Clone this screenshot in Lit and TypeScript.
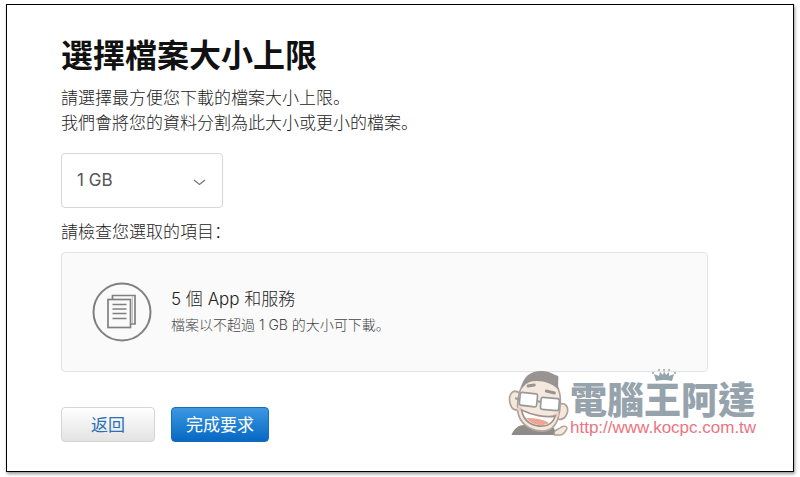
import { LitElement, html, css } from "lit";
import { customElement, state } from "lit/decorators.js";

@customElement("site-watermark")
class SiteWatermark extends LitElement {
  static styles = css`
    :host {
      display: flex;
      align-items: flex-end;
      font-family: "Noto Sans CJK TC", sans-serif;
    }
    .face {
      display: block;
      flex: none;
    }
    .words {
      position: relative;
      width: 186px;
    }
    .name {
      display: block;
      font-size: 37px;
      line-height: 37px;
      font-weight: 900;
      color: #96a3ac;
      white-space: nowrap;
    }
    .link {
      display: block;
      margin-top: 2px;
      font: 17px/17px "Liberation Sans", Arial, sans-serif;
      color: #ec7480;
      text-decoration: none;
      white-space: nowrap;
    }
    .crown {
      position: absolute;
      left: 82px;
      top: -11px;
    }
  `;

  render() {
    return html`
      <svg class="face" width="64" height="66" viewBox="-3 0 70 66" preserveAspectRatio="none" aria-hidden="true">
        <path d="M3 65 C6 58 11 55 17 55 L48 57 C50 58 51 61 52 65 Z" fill="#8f8b89" />
        <path d="M50 65 C49 60 53 60 56 58 C59 55 66 56 63 60 C61 63 58 65 56 65 Z" fill="#f5e8db" stroke="#ada39b" stroke-width="1.500" />
        <path d="M12 23 C4 18 0 25 1 31 C2 38 6 42 12 39 Z" fill="#f5e8db" stroke="#ada39b" stroke-width="1.800" />
        <path d="M55 35 C61 31 66 37 64 43 C62 49 56 51 52 48 Z" fill="#f5e8db" stroke="#ada39b" stroke-width="1.800" />
        <path d="M15 15 C10 24 9 33 10 42 C12 53 22 60 34 61 C45 62 51 57 54 48 C57 38 58 24 53 17 C44 8 24 6 15 15 Z" fill="#f5e9dd" stroke="#ada39b" stroke-width="1.800" />
        <path d="M14 19 C14 7 25 0 37 1 C43 1 48 4 54 6 C55 10 53 13 55 20 C48 14 40 11 30 11 C22 11 18 14 14 19 Z" fill="#999492" />
        <path d="M21 16 L28 15 M41 21 L50 23" stroke="#999492" stroke-width="3" stroke-linecap="round" fill="none" />
        <rect x="12" y="23" width="19" height="13" rx="2" fill="#fff" stroke="#969b9e" stroke-width="1.800" transform="rotate(6 21 30)" />
        <rect x="35" y="28" width="20" height="12" rx="2" fill="#fff" stroke="#969b9e" stroke-width="1.800" transform="rotate(5 45 34)" />
        <path d="M31 31 L35 32 M12 30 L7 28" stroke="#969b9e" stroke-width="2" />
        <ellipse cx="12" cy="39" rx="3" ry="2" fill="#f5cdbd" />
        <ellipse cx="52" cy="45" rx="3" ry="2" fill="#f5cdbd" />
        <path d="M14 40 C25 45 40 48 51 46 C48 54 41 57 33 56 C23 55 16 50 14 40 Z" fill="#fff" stroke="#a39390" stroke-width="1.800" />
        <path d="M19 48 C28 48 38 49 44 53 C36 57 25 55 19 48 Z" fill="#efa593" />
      </svg>
      <div class="words">
        <svg class="crown" width="24" height="13" viewBox="0 0 24 13" aria-hidden="true">
          <path d="M4 12 L2 5 L7 7 L8 3 L11 6 L12 2 L14 6 L17 3 L17 7 L22 5 L20 12 Q12 10 4 12 Z" fill="#96a3ac" />
          <g fill="#96a3ac"><circle cx="1" cy="4" r="1" /><circle cx="7" cy="1" r="1" /><circle cx="12" cy="1" r="1" /><circle cx="17" cy="1" r="1" /><circle cx="23" cy="4" r="1" /></g>
        </svg>
        <span class="name">電腦王阿達</span>
        <a class="link" href="http://www.kocpc.com.tw">http://www.kocpc.com.tw</a>
      </div>
    `;
  }
}

@customElement("app-root")
class AppRoot extends LitElement {
  @state() private size = "1 GB";

  static styles = css`
    :host {
      display: block;
      padding: 4px 6px 5px;
      background: #fff;
      font-family: Inter, "Noto Sans CJK SC", sans-serif;
      color: #222;
    }
    * {
      box-sizing: border-box;
    }
    .frame {
      position: relative;
      border: 1px solid #000;
      box-shadow: 1px 2px 3px #999;
      padding: 31px 85px 29px 54px;
    }
    h1 {
      margin: 0;
      font-size: 32px;
      line-height: 40px;
      font-weight: 700;
      color: #111;
    }
    p {
      margin: 0;
    }
    .intro {
      margin-top: 10px;
      font-size: 17px;
      line-height: 25px;
      font-weight: 300;
    }
    .picker {
      position: relative;
      width: 162px;
      margin-top: 17px;
    }
    select {
      display: block;
      width: 100%;
      height: 55px;
      padding: 0 40px 0 15px;
      border: 1px solid #d6d6d6;
      border-radius: 4px;
      background: #fff;
      appearance: none;
      font: 400 17px/25px Inter, sans-serif;
      color: #555;
    }
    .chevron {
      position: absolute;
      right: 17px;
      top: 25px;
      pointer-events: none;
    }
    .check {
      display: block;
      margin-top: 12px;
      font-size: 17px;
      line-height: 25px;
      font-weight: 300;
    }
    .card {
      display: flex;
      align-items: center;
      gap: 19px;
      min-height: 120px;
      margin-top: 7px;
      padding: 0 30px;
      border: 1px solid #e3e3e3;
      border-radius: 4px;
      background: #fafafa;
    }
    .docs {
      flex: none;
    }
    .title {
      font-size: 17px;
      line-height: 25px;
      font-weight: 300;
    }
    .note {
      font-size: 14px;
      line-height: 25px;
      font-weight: 300;
      color: #444;
    }
    .actions {
      display: flex;
      gap: 16px;
      margin-top: 35px;
    }
    button {
      height: 35px;
      padding: 0 14px 2px;
      border: 1px solid #d5d5d5;
      border-radius: 4px;
      background: linear-gradient(#fff, #e3e3e3);
      font: 400 17px/25px "Noto Sans CJK SC", sans-serif;
      color: #2a70b5;
    }
    .back {
      min-width: 94px;
    }
    .primary {
      border-color: #1a6cb8;
      background: linear-gradient(#3b98e0, #0768c4);
      color: #fff;
    }
    site-watermark {
      position: absolute;
      right: 37px;
      bottom: 35px;
    }
  `;

  private pick(e: Event) {
    this.size = (e.target as HTMLSelectElement).value;
  }

  render() {
    return html`
      <main class="frame" lang="zh-Hans">
        <h1>選擇檔案大小上限</h1>
        <p class="intro">請選擇最方便您下載的檔案大小上限。<br />我們會將您的資料分割為此大小或更小的檔案。</p>
        <div class="picker">
          <select aria-label="檔案大小上限" .value=${this.size} @change=${this.pick}>
            <option>1 GB</option>
            <option>2 GB</option>
            <option>5 GB</option>
            <option>10 GB</option>
          </select>
          <svg class="chevron" width="13" height="9" viewBox="0 0 13 9" aria-hidden="true">
            <path d="M1 2 L6.500 6.500 L12 2" fill="none" stroke="#777" stroke-width="1.300" />
          </svg>
        </div>
        <p class="check">請檢查您選取的項目：</p>
        <section class="card">
          <svg class="docs" width="60" height="60" viewBox="0 0 60 60" fill="none" stroke="#808080" aria-hidden="true">
            <circle cx="30" cy="30" r="28.500" stroke-width="2" />
            <path d="M20.500 17 V13.500 H43 V42 H38.500" stroke-width="1.700" />
            <path d="M40.500 14 V41" stroke-width="1" stroke="#c4c4c4" />
            <rect x="16" y="17.500" width="22.500" height="28" stroke-width="1.700" />
            <path d="M20.500 22.500 H34.500 M20.500 27 H34.500 M20.500 31.500 H34.500 M20.500 36.500 H34.500" stroke-width="1.700" />
          </svg>
          <div>
            <p class="title">5 個 App 和服務</p>
            <p class="note">檔案以不超過 ${this.size} 的大小可下載。</p>
          </div>
        </section>
        <div class="actions">
          <button type="button" class="back">返回</button>
          <button type="button" class="primary">完成要求</button>
        </div>
        <site-watermark lang="zh-Hant"></site-watermark>
      </main>
    `;
  }
}
